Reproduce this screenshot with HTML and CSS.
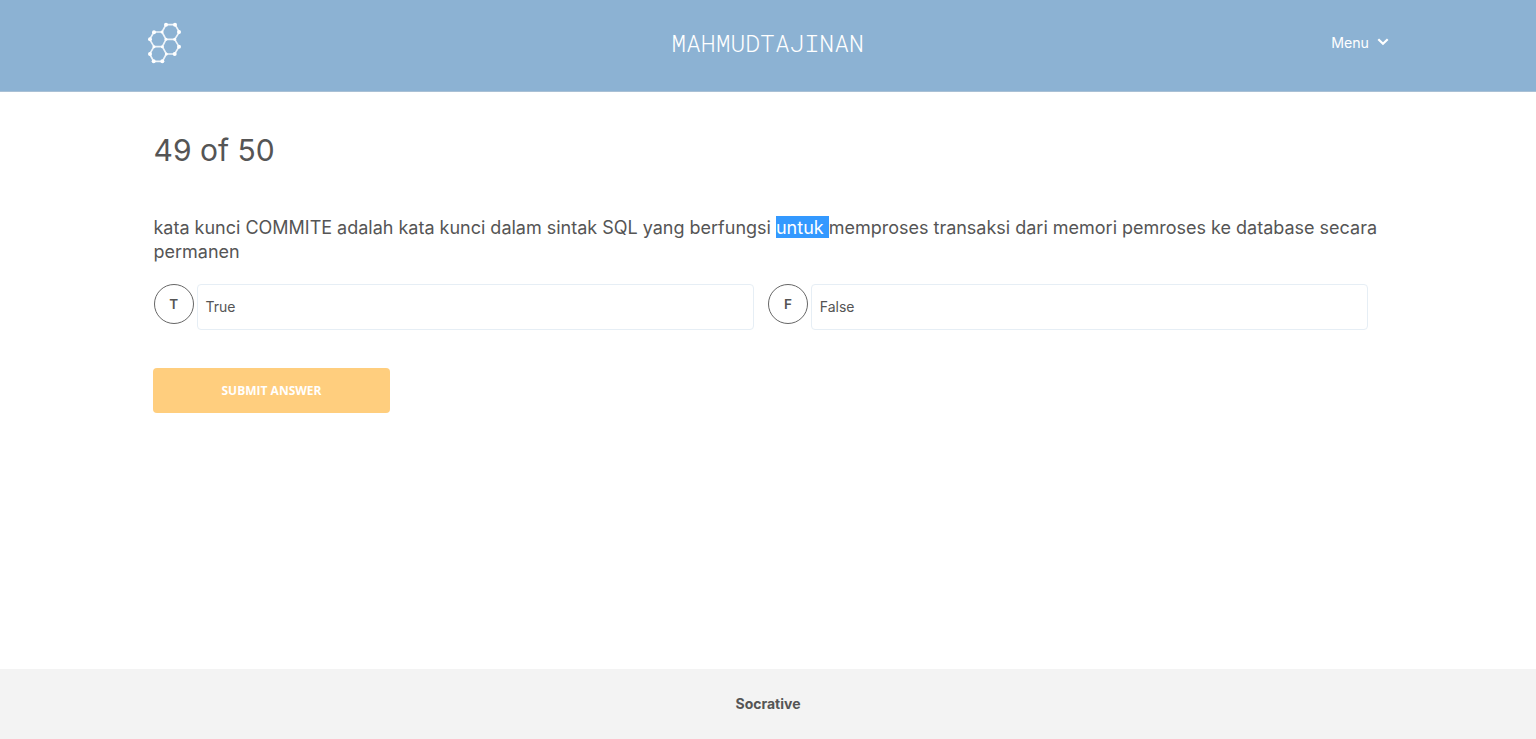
FILE: index.html
```html
<!DOCTYPE html>
<html lang="id">
<head>
<meta charset="utf-8">
<title>Socrative</title>
<link rel="stylesheet" href="styles.css">
</head>
<body>
<header class="header">
  <svg class="logo" viewBox="0 0 150 165" aria-hidden="true">
    <g fill="none" stroke="#fff" stroke-width="5" stroke-opacity=".85">
      <path d="M78 29H105L118 51L104 73H78L66 51Z"/>
      <path d="M66 51H42L29 73L42 95H67L78 73"/>
      <path d="M104 73L117 95L104 117H79L67 95"/>
      <path d="M42 95L29 117L41 139H67L79 117"/>
    </g>
    <g fill="#fff">
      <circle cx="78" cy="29" r="6"/><circle cx="105" cy="29" r="6"/><circle cx="117" cy="51" r="6"/>
      <circle cx="42" cy="52" r="6"/><circle cx="30" cy="73" r="6"/><circle cx="117" cy="95" r="6"/>
      <circle cx="104" cy="117" r="6"/><circle cx="30" cy="117" r="6"/><circle cx="41" cy="139" r="6"/>
      <circle cx="67" cy="139" r="6"/><circle cx="66" cy="51" r="4.5"/><circle cx="104" cy="73" r="4.5"/>
      <circle cx="78" cy="73" r="4.5"/><circle cx="42" cy="95" r="4.5"/><circle cx="67" cy="95" r="4.5"/><circle cx="79" cy="117" r="4.5"/>
    </g>
  </svg>
  <div class="room">MAHMUDTAJINAN</div>
  <div class="menu">Menu
    <svg class="chevron" viewBox="0 0 12 8" aria-hidden="true"><path d="M1.3 1.2L6 5.7L10.7 1.2" fill="none" stroke="#fff" stroke-width="2.2"/></svg>
  </div>
</header>
<main class="main">
  <h1 class="count">49 of 50</h1>
  <p class="question">kata kunci COMMITE adalah kata kunci dalam sintak SQL yang berfungsi <span class="selected">untuk </span>memproses transaksi dari memori pemroses ke database secara<br>permanen</p>
  <div class="answers">
    <div class="answer"><span class="letter">T</span><span class="box">True</span></div>
    <div class="answer"><span class="letter">F</span><span class="box">False</span></div>
  </div>
  <button class="submit">SUBMIT ANSWER</button>
</main>
<footer class="footer">Socrative</footer>
</body>
</html>
```
FILE: styles.css
```css
* { box-sizing: border-box; }
body {
  margin: 0;
  height: 739px;
  display: flex;
  flex-direction: column;
  overflow: hidden;
  background: #fff;
  color: #555;
  font-family: Inter, "Liberation Sans", sans-serif;
}
.header {
  height: 92px;
  padding: 15px 147.5px 0 140px;
  display: grid;
  grid-template-columns: 1fr auto 1fr;
  align-items: start;
  background: #8cb2d3;
  border-bottom: 1px solid #a9c0d5;
  color: #fff;
}
.logo { width: 50px; height: 55px; }
.room {
  margin-top: 12px;
  margin-right: -6.5px;
  font: 300 24.7px/32px "Roboto Mono", "Liberation Mono", monospace;
}
.menu {
  justify-self: end;
  display: flex;
  align-items: center;
  gap: 7.5px;
  margin-top: 18px;
  font-size: 14.2px;
  line-height: 20px;
}
.chevron { width: 12px; height: 8px; margin-top: -2px; }
.main { flex: 1; padding: 0 153.5px; }
.count {
  margin: 38px 0 0;
  font-size: 30px;
  font-weight: 400;
  line-height: 40px;
}
.question {
  margin: 46px 0 0;
  font-size: 17.99px;
  line-height: 24px;
  white-space: nowrap;
}
.selected { padding-top: 1px; background: #3399ff; color: #fff; }
.answers { display: flex; gap: 14px; margin-top: 20px; }
.answer { display: flex; gap: 3px; width: 600.4px; }
.letter {
  width: 40.4px;
  height: 40.4px;
  border: 1px solid #666;
  border-radius: 50%;
  font-size: 13.5px;
  font-weight: 600;
  line-height: 38px;
  text-align: center;
}
.box {
  flex: 1;
  height: 45.5px;
  padding-left: 7.5px;
  border: 1px solid #e6eef5;
  border-radius: 4px;
  font-size: 14px;
  line-height: 44px;
}
.submit {
  display: block;
  width: 237px;
  height: 45px;
  margin: 38.5px 0 0 -0.5px;
  padding: 0;
  border: 0;
  border-radius: 4px;
  background: #ffce7e;
  color: #fff;
  font: 700 12px/45px "Open Sans", sans-serif;
}
.footer {
  height: 70px;
  background: #f3f3f3;
  font-size: 14px;
  font-weight: 700;
  line-height: 70px;
  text-align: center;
}
```
